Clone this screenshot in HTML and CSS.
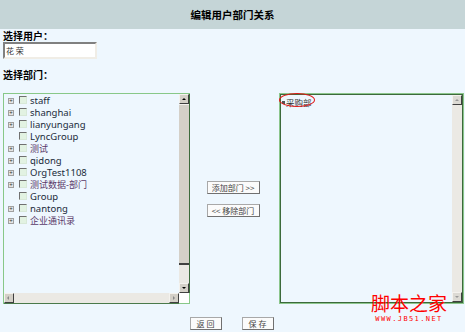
FILE: index.html
```html
<!DOCTYPE html>
<html lang="zh-CN">
<head>
    <meta charset="UTF-8">
    <title>编辑用户部门关系</title>
    <link rel="stylesheet" href="styles.css">
</head>
<body>
    <div class="header">编辑用户部门关系</div>
    <div class="page">
        <div class="label">选择用户：</div>
        <div class="user-input">花 荣</div>
        <div class="label dept-label">选择部门：</div>

        <div class="pick">
            <div class="box left-box">
                <div class="tree">
                    <div class="row"><span class="exp">+</span><span class="chk"></span>staff</div>
                    <div class="row"><span class="exp">+</span><span class="chk"></span>shanghai</div>
                    <div class="row"><span class="exp">+</span><span class="chk"></span>lianyungang</div>
                    <div class="row"><span class="exp blank"></span><span class="chk"></span>LyncGroup</div>
                    <div class="row"><span class="exp">+</span><span class="chk"></span><span class="cn">测试</span></div>
                    <div class="row"><span class="exp">+</span><span class="chk"></span>qidong</div>
                    <div class="row"><span class="exp">+</span><span class="chk"></span>OrgTest1108</div>
                    <div class="row"><span class="exp">+</span><span class="chk"></span><span class="cn">测试数据-部门</span></div>
                    <div class="row"><span class="exp blank"></span><span class="chk"></span>Group</div>
                    <div class="row"><span class="exp">+</span><span class="chk"></span>nantong</div>
                    <div class="row"><span class="exp">+</span><span class="chk"></span><span class="cn">企业通讯录</span></div>
                </div>
                <div class="vbar">
                    <span class="arrow up"></span>
                    <span class="thumb"></span>
                    <span class="track"></span>
                    <span class="arrow down"></span>
                </div>
                <div class="hbar">
                    <span class="arrow left"></span>
                    <span class="track"></span>
                    <span class="arrow right"></span>
                </div>
                <div class="corner"></div>
            </div>

            <div class="moves">
                <button class="btn">添加部门 &gt;&gt;</button>
                <button class="btn">&lt;&lt; 移除部门</button>
            </div>

            <div class="box right-box">
                <div class="tree chosen">
                    <div class="row"><span class="dot"></span>采购部</div>
                    <span class="ring"></span>
                </div>
                <div class="vbar">
                    <span class="arrow up"></span>
                    <span class="track"></span>
                    <span class="arrow down"></span>
                </div>
            </div>
        </div>

        <div class="actions">
            <button class="btn">返 回</button>
            <button class="btn">保 存</button>
        </div>
    </div>

    <div class="mark">
        <div class="mark-cn">脚本之家</div>
        <div class="mark-en">WWW.JB51.NET</div>
    </div>
</body>
</html>
```

FILE: styles.css
```css
body {
    margin: 0;
    background: #eef7fe;
    font-family: "Noto Sans CJK SC", sans-serif;
    color: #000;
    position: relative;
    height: 332px;
    overflow: hidden;
}
.header {
    height: 29px;
    background: #c5d5d7;
    display: flex;
    align-items: center;
    justify-content: center;
    font-size: 10.5px;
    font-weight: bold;
}
.page {
    padding: 1px 0 0 3px;
}
.label {
    font-size: 10px;
    font-weight: bold;
    line-height: 11px;
}
.user-input {
    width: 89px;
    height: 13px;
    margin-top: 1px;
    padding-left: 1px;
    background: #fff;
    border: 2px solid #f0ede6;
    border-top-color: #808080;
    border-left-color: #808080;
    font-size: 8px;
    line-height: 13px;
    color: #333;
}
.dept-label {
    margin-top: 10px;
}

/* department picker */
.pick {
    display: flex;
    margin-top: 13px;
    height: 211px;
}
.box {
    box-sizing: border-box;
    display: grid;
    border: 1px solid #88c888;
    position: relative;
}
.left-box {
    width: 187px;
    grid-template-columns: 1fr 10px;
    grid-template-rows: 1fr 10px;
}
.right-box {
    width: 185px;
    grid-template-columns: 1fr 10px;
    border: 1px solid #8cc68c;
    box-shadow: inset 1px 1px 0 #3c6a3c, inset -1px -1px 0 #3c6a3c;
    padding: 1px;
}
.tree {
    padding: 1px 0 0 4px;
    font-family: "Noto Sans", "Noto Sans CJK SC", sans-serif;
    font-size: 9.5px;
    color: #1a2a3a;
    position: relative;
}
.row {
    height: 12px;
    line-height: 12px;
    display: flex;
    align-items: center;
    white-space: nowrap;
}
.cn {
    color: #5a3a6a;
    font-size: 9px;
}
.exp {
    box-sizing: border-box;
    width: 6px;
    height: 6px;
    margin-right: 5px;
    border: 1px solid #a0a0a0;
    background: #e4e4e4;
    font-size: 6px;
    line-height: 4px;
    text-align: center;
    color: #333;
    overflow: hidden;
}
.exp.blank {
    border: 0;
    background: none;
}
.chk {
    box-sizing: border-box;
    width: 8px;
    height: 8px;
    margin-right: 3px;
    margin-top: -2px;
    border: 1px solid #d8e8d8;
    border-top-color: #707070;
    border-left-color: #707070;
    background: #e2f2e2;
}

/* fake classic scrollbars */
.vbar {
    display: flex;
    flex-direction: column;
    background: #ebe9e4;
    box-shadow: 1px 0 0 #3c6a3c;
}
.hbar {
    display: flex;
    background: #ebe9e4;
    box-shadow: 0 1px 0 #4a7a4a;
}
.corner {
    background: #fff;
}
.vbar .track, .hbar .track {
    flex: 1;
}
.thumb {
    height: 161px;
    background: #d4d0c8;
    border-top: 1px solid #f4f2ee;
    border-bottom: 2px solid #404040;
    box-sizing: border-box;
}
.arrow {
    width: 10px;
    height: 10px;
    box-sizing: border-box;
    background: #d4d0c8;
    border: 1px solid #404040;
    border-top-color: #f4f2ee;
    border-left-color: #f4f2ee;
    position: relative;
    flex: none;
}
.arrow::after {
    content: "";
    position: absolute;
    left: 2px;
    top: 3px;
    border: 2px solid transparent;
}
.arrow.up::after { border-bottom: 2px solid #000; top: 1px; }
.arrow.down::after { border-top: 2px solid #000; top: 3px; }
.arrow.left::after { border-right: 2px solid #888; left: 0; top: 2px; }
.arrow.right::after { border-left: 2px solid #888; left: 3px; top: 2px; }
.right-box .arrow { background: #dcdad4; }
.right-box .arrow.up::after { border-bottom-color: #999; }
.right-box .arrow.down::after { border-top-color: #999; }

.moves {
    width: 89px;
    display: flex;
    flex-direction: column;
    align-items: center;
    justify-content: center;
    gap: 10px;
    padding-right: 3px;
    box-sizing: border-box;
}
.btn {
    font-family: "Noto Sans CJK SC", sans-serif;
    font-size: 8px;
    color: #444;
    height: 13px;
    padding: 0 4px;
    line-height: 11px;
    background: #fbfbfb;
    border: 1px solid #a8a8a8;
    border-right-color: #707070;
    border-bottom-color: #707070;
}
.moves .btn {
    width: 53px;
    padding: 0;
}

.chosen {
    padding: 1px 0 0 1px;
    color: #333;
    font-family: "Noto Sans CJK SC", sans-serif;
    font-size: 8.5px;
}
.dot {
    width: 3px;
    height: 3px;
    margin-right: 1px;
    background: #555;
}
.ring {
    position: absolute;
    left: -2px;
    top: -2px;
    width: 36px;
    height: 14px;
    box-sizing: border-box;
    border: 1px solid #e01818;
    border-radius: 50%;
}

.actions {
    display: flex;
    justify-content: center;
    gap: 20px;
    margin-top: 13px;
    padding-right: 5px;
}
.actions .btn {
    width: 32px;
    padding: 0;
}

.mark {
    position: absolute;
    left: 371px;
    top: 292px;
    color: #f00;
    text-align: center;
}
.mark-cn {
    font-size: 19px;
    line-height: 22px;
}
.mark-en {
    margin-top: 1px;
    font-family: "DejaVu Sans Mono", monospace;
    font-size: 7px;
    line-height: 8px;
    letter-spacing: 1.4px;
}
```
